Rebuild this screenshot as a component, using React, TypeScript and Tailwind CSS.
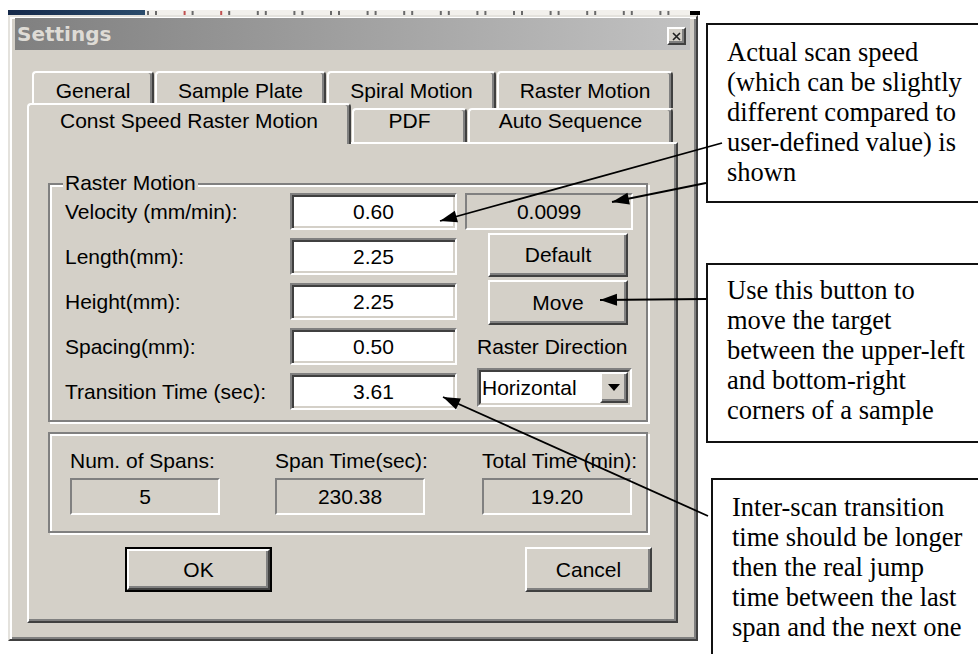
import React from 'react';

const raised =
  'bg-[#d4d0c8] border-2 border-t-white border-l-white border-r-[#404040] border-b-[#404040] shadow-[inset_-2px_-2px_0_#808080]';
const sunkenStatic =
  'bg-[#d4d0c8] border-2 border-t-[#808080] border-l-[#808080] border-r-white border-b-white';
const etched = 'border-2 border-[#808080] shadow-[inset_2px_2px_0_#ffffff,2px_2px_0_#ffffff]';

function Edit({ value }: { value: string }) {
  return (
    <div className="w-[167px] h-[37px] flex items-center justify-center bg-white border-2 border-t-[#808080] border-l-[#808080] border-r-white border-b-white shadow-[inset_2px_2px_0_#404040,inset_-2px_-2px_0_#d4d0c8]">
      {value}
    </div>
  );
}

function Readout({ value, className }: { value: string; className: string }) {
  return <div className={`flex items-center justify-center ${sunkenStatic} ${className}`}>{value}</div>;
}

function Tab({ label, className }: { label: string; className: string }) {
  return (
    <div
      className={`flex justify-center bg-[#d4d0c8] rounded-t-[4px] border-t-2 border-l-2 border-r-2 border-t-white border-l-white border-r-[#404040] shadow-[inset_-2px_0_0_#808080] ${className}`}
    >
      {label}
    </div>
  );
}

function BackStrip() {
  const ticks: number[] = [];
  for (let x = 147; x < 680; x += 36.6) ticks.push(x);
  return (
    <svg width="700" height="15" className="block shrink-0">
      <defs>
        <linearGradient id="navy" x1="0" x2="1" y1="0" y2="0">
          <stop offset="0" stopColor="#15294a" />
          <stop offset="1" stopColor="#2b4c6c" />
        </linearGradient>
      </defs>
      <rect x="8" y="10" width="137" height="5" fill="url(#navy)" />
      <rect x="145" y="10" width="545" height="5" fill="#f2f0ec" />
      {ticks.map((x, i) => (
        <g key={i}>
          <rect x={x} y="11" width="2" height="4" fill={i === 1 || i === 2 ? '#c05050' : '#6a6a6a'} />
          <rect x={x + 8} y="11" width="2" height="4" fill="#6a6a6a" />
        </g>
      ))}
      <rect x="690" y="11" width="10" height="4" fill="#000" />
    </svg>
  );
}

function Dialog() {
  return (
    <div className="ml-[8px] w-[690px] h-[626px] bg-[#d4d0c8] border-2 border-t-[#e4e2dd] border-l-[#e4e2dd] border-r-[#404040] border-b-[#404040] shadow-[inset_2px_2px_0_#ffffff,inset_-2px_-2px_0_#808080] pl-[5px] pt-[1px]">
      {/* Title bar */}
      <div className="w-[675px] h-[32px] flex items-center justify-between bg-linear-to-r from-[#808080] to-[#c2c2c2] pl-[2px] pr-[4px]">
        <span className="font-['DejaVu_Sans',sans-serif] font-bold text-[20px] text-[#dedbd5] leading-none">Settings</span>
        <div className={`mt-[4px] w-[19px] h-[18px] flex items-center justify-center ${raised}`}>
          <svg width="9" height="9" viewBox="0 0 9 9">
            <path d="M1 1 L8 8 M8 1 L1 8" stroke="#202020" strokeWidth="1.6" />
          </svg>
        </div>
      </div>

      {/* Tab control */}
      <div className="ml-[12px] mt-[21px] w-[651px]">
        <div className="flex h-[37px] pl-[5px] gap-[1px]">
          <Tab label="General" className="w-[122px] h-[37px] items-center" />
          <Tab label="Sample Plate" className="w-[171px] h-[37px] items-center" />
          <Tab label="Spiral Motion" className="w-[169px] h-[37px] items-center" />
          <Tab label="Raster Motion" className="w-[176px] h-[37px] items-center" />
        </div>
        <div className="flex items-start h-[34px] gap-[1px]">
          <Tab label="Const Speed Raster Motion" className="relative z-10 -mt-[5px] w-[324px] h-[41px] pt-[5px] leading-[22px]" />
          <Tab label="PDF" className="w-[115px] h-[34px] leading-[22px]" />
          <Tab label="Auto Sequence" className="w-[205px] h-[34px] leading-[22px]" />
        </div>

        {/* Panel */}
        <div className="w-[651px] h-[481px] border-2 border-t-white border-l-white border-r-[#404040] border-b-[#404040] shadow-[inset_-2px_-2px_0_#808080] pl-[19px] pt-[39px]">
          {/* Raster Motion group */}
          <div className={`relative w-[600px] h-[239px] ${etched}`}>
            <span className="absolute left-[13px] -top-[14px] px-[2px] bg-[#d4d0c8] leading-[24px]">Raster Motion</span>
            <div className="flex pt-[8px]">
              <div className="flex flex-col gap-[8px]">
                {[
                  ['Velocity (mm/min):', '0.60'],
                  ['Length(mm):', '2.25'],
                  ['Height(mm):', '2.25'],
                  ['Spacing(mm):', '0.50'],
                  ['Transition Time (sec):', '3.61'],
                ].map(([label, value]) => (
                  <div key={label} className="flex items-center h-[37px]">
                    <span className="w-[240px] pl-[15px] whitespace-nowrap">{label}</span>
                    <Edit value={value} />
                  </div>
                ))}
              </div>
              <div className="ml-[8px] flex flex-col items-start">
                <Readout value="0.0099" className="w-[168px] h-[37px]" />
                <div className={`ml-[23px] mt-[3px] w-[140px] h-[44px] flex items-center justify-center ${raised}`}>Default</div>
                <div className={`ml-[23px] mt-[3px] w-[140px] h-[45px] flex items-center justify-center ${raised}`}>Move</div>
                <span className="ml-[12px] mt-[10px] leading-[24px] whitespace-nowrap">Raster Direction</span>
                <div className="ml-[12px] mt-[9px] w-[155px] h-[39px] border-2 border-t-[#808080] border-l-[#808080] border-r-white border-b-white">
                  <div className="h-full flex border-2 border-t-[#404040] border-l-[#404040] border-r-[#d4d0c8] border-b-[#d4d0c8] bg-white">
                    <span className="flex-1 flex items-center pl-[1px]">Horizontal</span>
                    <div className={`w-[28px] h-full flex items-center justify-center ${raised}`}>
                      <svg width="12" height="7" viewBox="0 0 12 7">
                        <path d="M0 0 H12 L6 7 Z" fill="#000" />
                      </svg>
                    </div>
                  </div>
                </div>
              </div>
            </div>
          </div>

          {/* Totals group */}
          <div className={`mt-[10px] w-[600px] h-[101px] flex pl-[20px] pt-[15px] ${etched}`}>
            <div className="w-[205px] flex flex-col">
              <span className="leading-[24px]">Num. of Spans:</span>
              <Readout value="5" className="mt-[5px] w-[150px] h-[37px]" />
            </div>
            <div className="w-[207px] flex flex-col">
              <span className="leading-[24px]">Span Time(sec):</span>
              <Readout value="230.38" className="mt-[5px] w-[150px] h-[37px]" />
            </div>
            <div className="flex flex-col">
              <span className="leading-[24px]">Total Time (min):</span>
              <Readout value="19.20" className="mt-[5px] w-[150px] h-[37px]" />
            </div>
          </div>

          {/* Buttons */}
          <div className="flex mt-[14px]">
            <div className="ml-[77px] w-[147px] h-[45px] border-2 border-black">
              <div className={`w-full h-full flex items-center justify-center ${raised}`}>OK</div>
            </div>
            <div className={`ml-[253px] w-[127px] h-[45px] flex items-center justify-center ${raised}`}>Cancel</div>
          </div>
        </div>
      </div>
    </div>
  );
}

function Note({ lines, className }: { lines: string[]; className: string }) {
  return (
    <div
      className={`w-[300px] shrink-0 border-2 border-[#111] bg-white pl-[19px] font-['Liberation_Serif','Times_New_Roman',serif] text-[26.5px] leading-[30px] text-black ${className}`}
    >
      {lines.map((l) => (
        <div key={l} className="whitespace-nowrap">
          {l}
        </div>
      ))}
    </div>
  );
}

function Notes() {
  return (
    <div className="ml-[6px] shrink-0 flex flex-col pt-[23px]">
      <Note
        className="h-[180px] pt-[12px]"
        lines={['Actual scan speed', '(which can be slightly', 'different compared to', 'user-defined value) is', 'shown']}
      />
      <Note
        className="mt-[60px] h-[180px] pt-[10px]"
        lines={['Use this button to', 'move the target', 'between the upper-left', 'and bottom-right', 'corners of a sample']}
      />
      <Note
        className="mt-[35px] ml-[5px] h-[200px] pt-[12px]"
        lines={['Inter-scan transition', 'time should be longer', 'then the real jump', 'time between the last', 'span and the next one']}
      />
    </div>
  );
}

function head(x1: number, y1: number, x2: number, y2: number, len = 17, half = 6) {
  const dx = x2 - x1;
  const dy = y2 - y1;
  const L = Math.hypot(dx, dy);
  const ux = dx / L;
  const uy = dy / L;
  const bx = x2 - ux * len;
  const by = y2 - uy * len;
  return `${x2},${y2} ${bx - uy * half},${by + ux * half} ${bx + uy * half},${by - ux * half}`;
}

function Arrows() {
  const arrows = [
    [722, 143, 440, 221],
    [706, 183, 612, 202],
    [706, 299, 600, 300],
    [708, 516, 443, 397],
  ];
  return (
    <svg width="978" height="654" className="absolute inset-0 pointer-events-none">
      {arrows.map(([x1, y1, x2, y2], i) => (
        <g key={i}>
          <line x1={x1} y1={y1} x2={x2} y2={y2} stroke="#000" strokeWidth="1.8" />
          <polygon points={head(x1, y1, x2, y2)} fill="#000" />
        </g>
      ))}
    </svg>
  );
}

export default function App() {
  return (
    <div className="relative flex w-[978px] h-[654px] overflow-hidden bg-white font-['Liberation_Sans',Arial,sans-serif] text-[21px] text-black">
      <div className="w-[700px] shrink-0 flex flex-col">
        <BackStrip />
        <Dialog />
      </div>
      <Notes />
      <Arrows />
    </div>
  );
}
